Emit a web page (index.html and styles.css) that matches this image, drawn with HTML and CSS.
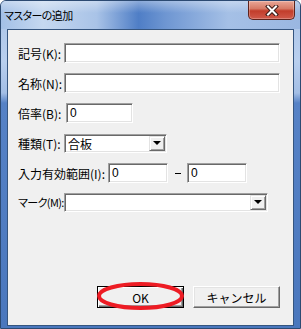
FILE: index.html
```html
<!DOCTYPE html>
<html lang="ja">
<head>
    <meta charset="UTF-8">
    <title>マスターの追加</title>
    <link rel="stylesheet" href="styles.css">
</head>
<body>

    <div class="window">
        <div class="titlebar">
            <span class="title">マスターの追加</span>
            <div class="close">
                <svg width="14" height="11" viewBox="0 0 14 11">
                    <path d="M3 1.5 L11 9.5 M11 1.5 L3 9.5" stroke="#3b1a16" stroke-width="4" stroke-linecap="square"/>
                    <path d="M3 1.5 L11 9.5 M11 1.5 L3 9.5" stroke="#ffffff" stroke-width="2" stroke-linecap="square"/>
                </svg>
            </div>
        </div>

        <div class="client">
            <div class="row">
                <label class="lbl">記号(K):</label>
                <input class="edit edit-long" type="text" value="">
            </div>
            <div class="row">
                <label class="lbl">名称(N):</label>
                <input class="edit edit-long" type="text" value="">
            </div>
            <div class="row">
                <label class="lbl lbl-rate">倍率(B):</label>
                <input class="edit edit-rate" type="text" value="0">
            </div>
            <div class="row">
                <label class="lbl">種類(T):</label>
                <div class="combo combo-kind">
                    <span class="combo-text">合板</span>
                    <span class="combo-btn"><span class="arrow"></span></span>
                </div>
            </div>
            <div class="row row-range">
                <label class="lbl lbl-range">入力有効範囲(I):</label>
                <input class="edit edit-range" type="text" value="0">
                <span class="dash"></span>
                <input class="edit edit-range" type="text" value="0">
            </div>
            <div class="row row-mark">
                <label class="lbl lbl-mark">マーク(M):</label>
                <div class="combo combo-mark">
                    <span class="combo-text"></span>
                    <span class="combo-btn"><span class="arrow"></span></span>
                </div>
            </div>

            <div class="buttons">
                <div class="ok-wrap">
                    <button class="btn btn-default">OK</button>
                    <!-- red hand drawn circle around the OK button -->
                    <svg class="ring" width="87" height="28" viewBox="0 0 87 28">
                        <ellipse cx="43.5" cy="14" rx="41.5" ry="12" fill="none" stroke="#ed1c24" stroke-width="4"/>
                    </svg>
                </div>
                <button class="btn">キャンセル</button>
            </div>
        </div>
    </div>

</body>
</html>
```

FILE: styles.css
```css
body {
    margin: 0;
    background: #ffffff;
    font-family: "Noto Sans CJK JP", "Noto Sans", sans-serif;
    font-size: 12px;
    font-feature-settings: "palt";
}

.window {
    width: 301px;
    height: 329px;
    box-sizing: border-box;
    border: 1px solid #2c4a72;
    border-radius: 6px 6px 0 0;
    display: flex;
    flex-direction: column;
    background: linear-gradient(180deg, #a9c3e7 0, #b9cfee 60px, #a3bee5 92px, #5682c6 102px, #4a77bd 100%);
    overflow: hidden;
}

.titlebar {
    height: 28px;
    display: flex;
    justify-content: space-between;
    align-items: flex-start;
    padding-left: 3px;
    background:
        linear-gradient(180deg, rgba(255,255,255,0.35) 0, rgba(255,255,255,0) 12px),
        linear-gradient(90deg, #a3c0e7 0%, #c5d8f0 14%, #a9c3e7 32%, #4f7ec6 46%, #6e96d2 55%, #a5c0e6 76%, #9ab7e1 100%);
}

.title {
    margin-top: 6px;
    font-size: 11px;
    letter-spacing: -0.6px;
    color: #000;
}

.close {
    width: 45px;
    height: 18px;
    margin-right: 5px;
    border: 1px solid #5e231c;
    border-top: none;
    border-radius: 0 0 5px 5px;
    background: linear-gradient(180deg, #e9a797 0%, #d67a66 42%, #c23d2b 55%, #d0594a 100%);
    box-shadow: inset 0 0 0 1px rgba(255,255,255,0.25);
    display: flex;
    align-items: center;
    justify-content: center;
}

.client {
    flex: 1;
    margin: 0 6px 2px 6px;
    background: #f0f0f0;
    border: 1px solid #35557f;
    display: flex;
    flex-direction: column;
    padding-left: 10px;
    position: relative;
}

.row {
    height: 20px;
    margin-top: 10px;
    display: flex;
    align-items: center;
}

.row:first-child {
    margin-top: 13px;
}

.row-mark {
    margin-top: 9px;
}

.lbl {
    width: 46px;
    white-space: nowrap;
    color: #000;
}

.lbl-rate {
    width: 48px;
}

.lbl-range {
    width: 90px;
}

.lbl-mark {
    font-size: 11px;
    letter-spacing: -0.6px;
}

.edit {
    height: 20px;
    box-sizing: border-box;
    margin: 0;
    padding: 0 3px;
    border: 1px solid;
    border-color: #a0a0a0 #ffffff #ffffff #a0a0a0;
    box-shadow: inset 1px 1px 0 #696969, inset -1px -1px 0 #e3e3e3;
    background: #ffffff;
    font-family: "Liberation Sans", sans-serif;
    font-size: 12px;
    color: #000;
    outline: none;
}

.edit-long {
    width: 216px;
}

.edit-rate {
    width: 67px;
}

.edit-range {
    width: 60px;
}

.dash {
    width: 19px;
    display: flex;
    justify-content: center;
}

.dash::before {
    content: "";
    width: 6px;
    height: 1px;
    background: #000;
}

.combo {
    height: 19px;
    box-sizing: border-box;
    border: 1px solid;
    border-color: #a0a0a0 #ffffff #ffffff #a0a0a0;
    box-shadow: inset 1px 1px 0 #696969, inset -1px -1px 0 #e3e3e3;
    background: #ffffff;
    display: flex;
    align-items: center;
    padding: 1px 1px 1px 3px;
}

.combo-kind {
    width: 103px;
}

.combo-mark {
    width: 204px;
}

.combo-text {
    flex: 1;
}

.combo-btn {
    width: 16px;
    height: 15px;
    box-sizing: border-box;
    border: 1px solid;
    border-color: #e3e3e3 #696969 #696969 #e3e3e3;
    box-shadow: inset 1px 1px 0 #ffffff, inset -1px -1px 0 #a0a0a0;
    background: #f0f0f0;
    display: flex;
    align-items: center;
    justify-content: center;
}

.arrow {
    width: 0;
    height: 0;
    border-left: 4px solid transparent;
    border-right: 4px solid transparent;
    border-top: 4px solid #000;
}

.buttons {
    margin-top: auto;
    padding: 0 13px 17px 0;
    display: flex;
    justify-content: flex-end;
    gap: 9px;
}

.ok-wrap {
    position: relative;
}

.btn {
    width: 87px;
    height: 22px;
    margin: 0;
    padding: 0;
    box-sizing: border-box;
    border: 1px solid;
    border-color: #ffffff #696969 #696969 #ffffff;
    box-shadow: inset -1px -1px 0 #a0a0a0, inset 1px 1px 0 #e3e3e3;
    background: #f0f0f0;
    font-family: "Noto Sans CJK JP", sans-serif;
    font-size: 12px;
    color: #000;
}

.btn-default {
    border-color: #000;
    box-shadow: inset 1px 1px 0 #ffffff, inset -1px -1px 0 #696969, inset -2px -2px 0 #a0a0a0;
}

.ring {
    position: absolute;
    left: 0;
    top: -4px;
}
```
